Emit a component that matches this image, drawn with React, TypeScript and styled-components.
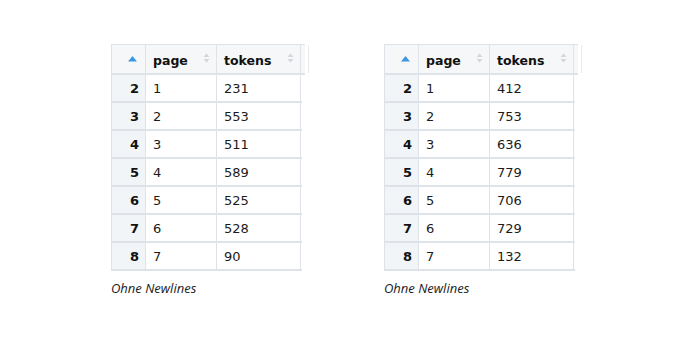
import React from 'react';
import styled, { createGlobalStyle } from 'styled-components';

const GlobalStyle = createGlobalStyle`
  html, body {
    margin: 0;
    padding: 0;
    background: #ffffff;
  }
  body {
    font-family: "DejaVu Sans", sans-serif;
    color: #1b1b1b;
  }
`;

type Row = { id: number; page: number; tokens: number };

const left: Row[] = [
  { id: 2, page: 1, tokens: 231 },
  { id: 3, page: 2, tokens: 553 },
  { id: 4, page: 3, tokens: 511 },
  { id: 5, page: 4, tokens: 589 },
  { id: 6, page: 5, tokens: 525 },
  { id: 7, page: 6, tokens: 528 },
  { id: 8, page: 7, tokens: 90 }
];

const right: Row[] = [
  { id: 2, page: 1, tokens: 412 },
  { id: 3, page: 2, tokens: 753 },
  { id: 4, page: 3, tokens: 636 },
  { id: 5, page: 4, tokens: 779 },
  { id: 6, page: 5, tokens: 706 },
  { id: 7, page: 6, tokens: 729 },
  { id: 8, page: 7, tokens: 132 }
];

const Page = styled.div`
  display: flex;
  gap: 79px;
  padding: 44px 0 0 111px;
`;

const Figure = styled.div`
  display: flex;
  flex-direction: column;
  width: 194px;
`;

const Grid = styled.div`
  display: flex;
  flex-direction: column;
  width: 190px;
  border-left: 1px solid #dde3e8;
`;

const HeaderRow = styled.div`
  display: grid;
  grid-template-columns: 34px 71px 84px 4px;
  height: 31px;
  width: 193px;
  background: #f6f7f8;
  border-top: 1px solid #dde3e8;
  border-bottom: 2px solid #dde3e8;
  box-sizing: border-box;
`;

const BodyRow = styled.div`
  display: grid;
  grid-template-columns: 34px 71px 84px;
  height: 28px;
  border-bottom: 2px solid #dde3e8;
  box-sizing: border-box;
`;

const HeadCell = styled.div<{ $gutter?: boolean }>`
  position: relative;
  display: flex;
  align-items: center;
  padding: 2px 0 0 7px;
  font-size: 12.5px;
  font-weight: bold;
  color: #111;
  border-right: 1px solid ${p => (p.$gutter ? '#e6eaed' : '#dde3e8')};
`;

const IndexHead = styled.div`
  display: flex;
  align-items: center;
  justify-content: flex-end;
  padding-right: 8px;
  border-right: 1px solid #dde3e8;
`;

const Cell = styled.div`
  display: flex;
  align-items: center;
  padding-left: 7px;
  font-size: 13px;
  color: #1b1b1b;
  border-right: 1px solid #dde3e8;
`;

const IndexCell = styled.div`
  display: flex;
  align-items: center;
  justify-content: flex-end;
  padding-right: 6px;
  font-size: 13px;
  font-weight: bold;
  color: #111;
  background: #f1f5f8;
  border-right: 1px solid #dde3e8;
`;

const SortIcon = styled.svg`
  position: absolute;
  right: 6px;
  top: 8px;
`;

const Caption = styled.div`
  margin-top: 8px;
  font-family: "Open Sans", sans-serif;
  font-style: italic;
  font-size: 13px;
  color: #1b1b1b;
`;

const SortBoth = () => (
  <SortIcon width="7" height="10" viewBox="0 0 7 10">
    <path d="M3.5 0.5 L6.5 4 L0.5 4 Z" fill="#d4d7da" />
    <path d="M3.5 9.5 L6.5 6 L0.5 6 Z" fill="#d4d7da" />
  </SortIcon>
);

const SortAsc = () => (
  <svg width="9" height="6" viewBox="0 0 9 6">
    <path d="M4.5 0 L9 5.5 L0 5.5 Z" fill="#3d97e0" />
  </svg>
);

const DataTable: React.FC<{ rows: Row[] }> = ({ rows }) => (
  <Figure>
    <Grid>
      <HeaderRow>
        <IndexHead>
          <SortAsc />
        </IndexHead>
        <HeadCell>
          page
          <SortBoth />
        </HeadCell>
        <HeadCell>
          tokens
          <SortBoth />
        </HeadCell>
        <HeadCell $gutter />
      </HeaderRow>
      {rows.map(r => (
        <BodyRow key={r.id}>
          <IndexCell>{r.id}</IndexCell>
          <Cell>{r.page}</Cell>
          <Cell>{r.tokens}</Cell>
        </BodyRow>
      ))}
    </Grid>
    <Caption>Ohne Newlines</Caption>
  </Figure>
);

export default function App() {
  return (
    <>
      <GlobalStyle />
      <Page>
        <DataTable rows={left} />
        <DataTable rows={right} />
      </Page>
    </>
  );
}
